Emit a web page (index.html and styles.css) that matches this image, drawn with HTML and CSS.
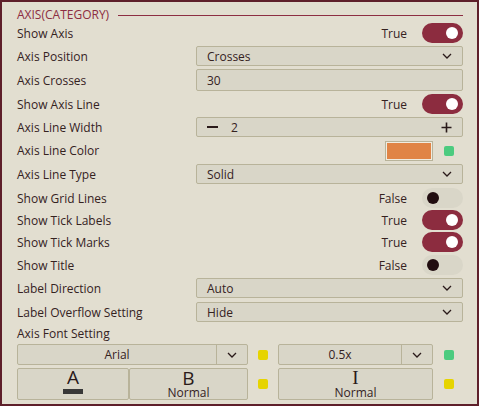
FILE: index.html
```html
<!DOCTYPE html>
<html>
<head>
<meta charset="utf-8">
<link rel="stylesheet" href="styles.css">
</head>
<body>
<div class="panel">
  <div class="section-head"><span class="section-title">AXIS(CATEGORY)</span><span class="section-line"></span></div>

  <div class="row first">
    <span class="label">Show Axis</span>
    <span class="tval">True</span><span class="toggle on"><span class="knob"></span></span>
  </div>
  <div class="row">
    <span class="label">Axis Position</span>
    <div class="select"><span class="sel-text">Crosses</span><span class="chev"><svg width="10" height="6" viewBox="0 0 10 6"><path d="M1 1 L5 5 L9 1" fill="none" stroke="#2a1a1a" stroke-width="1.3"/></svg></span></div>
  </div>
  <div class="row tall">
    <span class="label">Axis Crosses</span>
    <div class="input"><span class="sel-text">30</span></div>
  </div>
  <div class="row">
    <span class="label">Show Axis Line</span>
    <span class="tval">True</span><span class="toggle on"><span class="knob"></span></span>
  </div>
  <div class="row">
    <span class="label">Axis Line Width</span>
    <div class="stepper"><span class="minus"></span><span class="step-val">2</span><span class="plus"><svg width="11" height="11" viewBox="0 0 11 11"><path d="M5.5 0.5 V10.5 M0.5 5.5 H10.5" stroke="#2a1a1a" stroke-width="1.6"/></svg></span></div>
  </div>
  <div class="row r21">
    <span class="label">Axis Line Color</span>
    <span class="color-box"></span><span class="dot green"></span>
  </div>
  <div class="row">
    <span class="label">Axis Line Type</span>
    <div class="select"><span class="sel-text">Solid</span><span class="chev"><svg width="10" height="6" viewBox="0 0 10 6"><path d="M1 1 L5 5 L9 1" fill="none" stroke="#2a1a1a" stroke-width="1.3"/></svg></span></div>
  </div>
  <div class="row gap4">
    <span class="label">Show Grid Lines</span>
    <span class="tval">False</span><span class="toggle off"><span class="knob"></span></span>
  </div>
  <div class="row gap2">
    <span class="label">Show Tick Labels</span>
    <span class="tval">True</span><span class="toggle on"><span class="knob"></span></span>
  </div>
  <div class="row gap2">
    <span class="label">Show Tick Marks</span>
    <span class="tval">True</span><span class="toggle on"><span class="knob"></span></span>
  </div>
  <div class="row">
    <span class="label">Show Title</span>
    <span class="tval">False</span><span class="toggle off"><span class="knob"></span></span>
  </div>
  <div class="row">
    <span class="label">Label Direction</span>
    <div class="select"><span class="sel-text">Auto</span><span class="chev"><svg width="10" height="6" viewBox="0 0 10 6"><path d="M1 1 L5 5 L9 1" fill="none" stroke="#2a1a1a" stroke-width="1.3"/></svg></span></div>
  </div>
  <div class="row gap4">
    <span class="label">Label Overflow Setting</span>
    <div class="select"><span class="sel-text">Hide</span><span class="chev"><svg width="10" height="6" viewBox="0 0 10 6"><path d="M1 1 L5 5 L9 1" fill="none" stroke="#2a1a1a" stroke-width="1.3"/></svg></span></div>
  </div>
  <div class="font-label">Axis Font Setting</div>
  <div class="font-grid">
    <div class="fselect fam"><span class="fs-text">Arial</span><span class="fs-chev"><svg width="10" height="6" viewBox="0 0 10 6"><path d="M1 1 L5 5 L9 1" fill="none" stroke="#2a1a1a" stroke-width="1.3"/></svg></span></div>
    <span class="dot yellow"></span>
    <div class="fselect size"><span class="fs-text">0.5x</span><span class="fs-chev"><svg width="10" height="6" viewBox="0 0 10 6"><path d="M1 1 L5 5 L9 1" fill="none" stroke="#2a1a1a" stroke-width="1.3"/></svg></span></div>
    <span class="dot green"></span>

    <div class="btn-pair">
      <div class="fbtn a-btn"><span class="glyph">A</span><span class="a-bar"></span></div>
      <div class="fbtn"><span class="glyph">B</span><span class="sub">Normal</span></div>
    </div>
    <span class="dot yellow"></span>
    <div class="fbtn i-btn"><span class="glyph ibeam">I</span><span class="sub">Normal</span></div>
    <span class="dot yellow"></span>
  </div>
</div>
</body>
</html>
```

FILE: styles.css
```css
html, body {
  margin: 0;
  padding: 0;
}
body {
  width: 479px;
  height: 406px;
  background: #e2ded0;
  font-family: "Open Sans", "Noto Sans", sans-serif;
  font-size: 12px;
  color: #35221f;
}
.panel {
  box-sizing: border-box;
  width: 479px;
  height: 406px;
  border: 2px solid #5e1f2a;
  padding: 4px 14px 0 15px;
  display: flex;
  flex-direction: column;
}
.section-head {
  display: flex;
  align-items: center;
  height: 17px;
  gap: 9px;
}
.section-title {
  color: #8d2d42;
  font-size: 12px;
  line-height: 17px;
}
.section-line {
  flex: 1;
  height: 1px;
  background: #8d2d42;
  margin-top: 1px;
}
.row {
  display: flex;
  align-items: center;
  height: 20px;
  margin-top: 3px;
}
.row.first { margin-top: 0; }
.row.tall { height: 22px; }
.row.r21 { height: 21px; }
.row.gap4 { margin-top: 4px; }
.row.gap2 { margin-top: 2px; }
.label {
  flex: 1;
  white-space: nowrap;
}
.tval {
  margin-right: 15px;
}
.toggle {
  width: 41px;
  height: 20px;
  border-radius: 10px;
  position: relative;
  display: block;
}
.toggle.on { background: #8c2c3f; }
.toggle.off { background: #d9d6c8; }
.knob {
  position: absolute;
  top: 4px;
  width: 12px;
  height: 12px;
  border-radius: 50%;
}
.toggle.on .knob { right: 5px; background: #ffffff; }
.toggle.off .knob { left: 5px; background: #210d10; }

.select, .input, .stepper {
  box-sizing: border-box;
  width: 267px;
  height: 20px;
  background: #d9d6c8;
  border: 1px solid #b8b39a;
  border-radius: 2px;
  display: flex;
  align-items: center;
  padding: 0 10px;
}
.input { height: 22px; }
.sel-text { flex: 1; }
.chev { display: flex; align-items: center; }
.minus {
  width: 11px;
  height: 2px;
  background: #2a1a1a;
  margin-right: 13px;
}
.step-val { flex: 1; }
.plus { display: flex; }

.color-box {
  box-sizing: border-box;
  width: 48px;
  height: 20px;
  background: #e08446;
  border: 1px solid #b8b39a;
  box-shadow: inset 0 0 0 1px #f0ece0;
  margin-right: 11px;
}
.dot {
  display: block;
  width: 10px;
  height: 10px;
  border-radius: 2px;
}
.dot.green { background: #4ccb7f; }
.dot.yellow { background: #e6d400; }
.row .dot { margin-right: 9px; }

.font-label {
  height: 16px;
  margin-top: 3px;
  display: flex;
  align-items: center;
}
.font-grid {
  display: grid;
  grid-template-columns: 231px 30px 156px 20px;
  grid-template-rows: 21px 32px;
  row-gap: 3px;
  align-items: center;
  margin-top: 3px;
}
.fselect {
  box-sizing: border-box;
  height: 21px;
  background: #d9d6c8;
  border: 1px solid #b8b39a;
  border-radius: 2px;
  display: flex;
  align-items: stretch;
}
.fs-text {
  flex: 1;
  display: flex;
  align-items: center;
  justify-content: center;
}
.fs-chev {
  width: 30px;
  border-left: 1px solid #b8b39a;
  display: flex;
  align-items: center;
  justify-content: center;
}
.fam { width: 231px; }
.size { width: 155px; }
.font-grid > .dot { justify-self: start; margin-left: 10px; }

.btn-pair {
  display: flex;
  height: 32px;
}
.fbtn {
  box-sizing: border-box;
  height: 32px;
  background: #d9d6c8;
  border: 1px solid #b8b39a;
  border-radius: 2px;
  display: flex;
  flex-direction: column;
  align-items: center;
  justify-content: center;
}
.btn-pair .fbtn:first-child { width: 112px; }
.btn-pair .fbtn:last-child { width: 119px; }
.i-btn { width: 155px; }
.glyph {
  font-size: 19px;
  line-height: 16px;
  color: #2a1a1a;
}
.a-btn { justify-content: flex-start; }
.a-btn .glyph { margin-top: 0; }
.ibeam {
  font-family: "Liberation Serif", serif;
  font-size: 19px;
}
.sub {
  font-size: 12px;
  line-height: 13px;
  color: #35221f;
}
.a-bar {
  width: 20px;
  height: 5px;
  background: #383838;
  margin-top: 4px;
}
```
